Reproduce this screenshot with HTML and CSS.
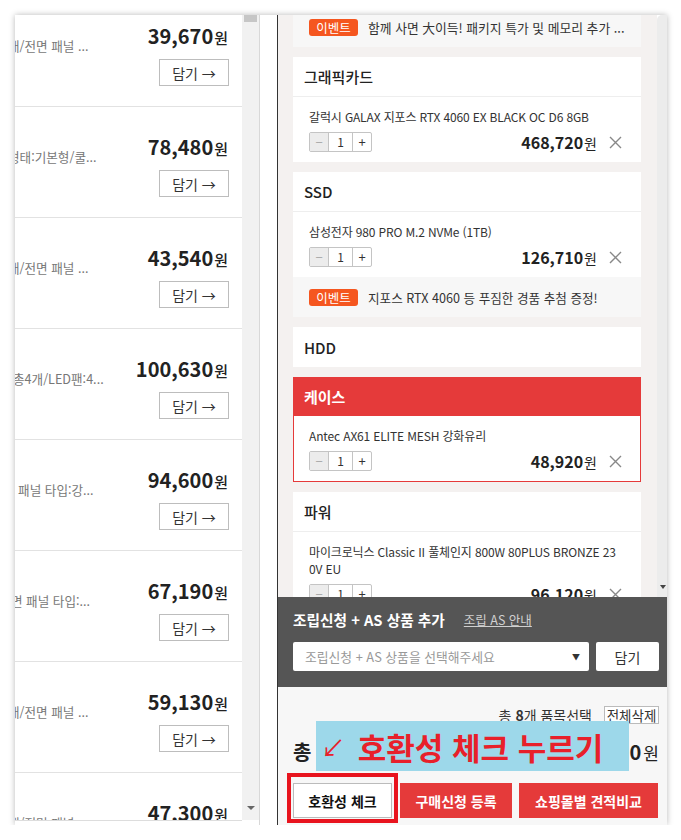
FILE: index.html
```html
<!DOCTYPE html>
<html lang="ko">
<head>
<meta charset="utf-8">
<title>견적</title>
<link rel="stylesheet" href="styles.css">
</head>
<body>
<div class="frame">
  <div class="left">
    <div class="list">
      <div class="row first"><div class="desc i7">개/전면 패널 ...</div><div class="buy"><div class="lprice">39,670<span>원</span></div><button class="add">담기 →</button></div></div>
      <div class="row"><div class="desc i6">형태:기본형/쿨...</div><div class="buy"><div class="lprice">78,480<span>원</span></div><button class="add">담기 →</button></div></div>
      <div class="row"><div class="desc i7">개/전면 패널 ...</div><div class="buy"><div class="lprice">43,540<span>원</span></div><button class="add">담기 →</button></div></div>
      <div class="row"><div class="desc i2">총4개/LED팬:4...</div><div class="buy"><div class="lprice">100,630<span>원</span></div><button class="add">담기 →</button></div></div>
      <div class="row"><div class="desc i12">면 패널 타입:강...</div><div class="buy"><div class="lprice">94,600<span>원</span></div><button class="add">담기 →</button></div></div>
      <div class="row"><div class="desc i3">면 패널 타입:...</div><div class="buy"><div class="lprice">67,190<span>원</span></div><button class="add">담기 →</button></div></div>
      <div class="row"><div class="desc i7">개/전면 패널 ...</div><div class="buy"><div class="lprice">59,130<span>원</span></div><button class="add">담기 →</button></div></div>
      <div class="row"><div class="desc i7">개/전면 패널 ...</div><div class="buy"><div class="lprice">47,300<span>원</span></div><button class="add">담기 →</button></div></div>
    </div>
    <div class="vscroll"><div class="thumb"></div><div class="varrow"></div></div>
  </div>
  <div class="gutter"></div>
  <div class="right">
    <div class="scrollarea">
      <div class="cards">
        <div class="card top">
          <div class="event"><span class="badge">이벤트</span><span class="etext">함께 사면 大이득! 패키지 특가 및 메모리 추가 ...</span></div>
        </div>
        <div class="card">
          <div class="chead">그래픽카드</div>
          <div class="cbody">
            <div class="pname">갈럭시 GALAX 지포스 RTX 4060 EX BLACK OC D6 8GB</div>
            <div class="prow">
              <div class="qty"><span class="q minus">−</span><span class="q num">1</span><span class="q plus">+</span></div>
              <div class="price">468,720<span>원</span></div>
              <svg class="del" viewBox="0 0 13 13"><path d="M1 1L12 12M12 1L1 12"/></svg>
            </div>
          </div>
        </div>
        <div class="card">
          <div class="chead">SSD</div>
          <div class="cbody">
            <div class="pname">삼성전자 980 PRO M.2 NVMe (1TB)</div>
            <div class="prow">
              <div class="qty"><span class="q minus">−</span><span class="q num">1</span><span class="q plus">+</span></div>
              <div class="price">126,710<span>원</span></div>
              <svg class="del" viewBox="0 0 13 13"><path d="M1 1L12 12M12 1L1 12"/></svg>
            </div>
          </div>
          <div class="event"><span class="badge">이벤트</span><span class="etext e2">지포스 RTX 4060 등 푸짐한 경품 추첨 증정!</span></div>
        </div>
        <div class="card">
          <div class="chead solo">HDD</div>
        </div>
        <div class="card sel">
          <div class="chead">케이스</div>
          <div class="cbody">
            <div class="pname">Antec AX61 ELITE MESH 강화유리</div>
            <div class="prow">
              <div class="qty"><span class="q minus">−</span><span class="q num">1</span><span class="q plus">+</span></div>
              <div class="price">48,920<span>원</span></div>
              <svg class="del" viewBox="0 0 13 13"><path d="M1 1L12 12M12 1L1 12"/></svg>
            </div>
          </div>
        </div>
        <div class="card">
          <div class="chead">파워</div>
          <div class="cbody">
            <div class="pname">마이크로닉스 Classic II 풀체인지 800W 80PLUS BRONZE 230V EU</div>
            <div class="prow">
              <div class="qty"><span class="q minus">−</span><span class="q num">1</span><span class="q plus">+</span></div>
              <div class="price">96,120<span>원</span></div>
              <svg class="del" viewBox="0 0 13 13"><path d="M1 1L12 12M12 1L1 12"/></svg>
            </div>
          </div>
        </div>
      </div>
      <div class="rscroll"><div class="rarrow"></div></div>
    </div>
    <div class="assembly">
      <div class="atitle"><b>조립신청 + AS 상품 추가</b><a href="#" class="alink">조립 AS 안내</a></div>
      <div class="aform">
        <div class="select"><span>조립신청 + AS 상품을 선택해주세요</span><span class="caret">▼</span></div>
        <button class="abtn">담기</button>
      </div>
    </div>
    <div class="summary">
      <div class="srow1"><span class="cnt">총 <b>8</b>개 품목선택</span><button class="delall">전체삭제</button></div>
      <div class="srow2"><span class="tlabel">총</span><span class="total">1,108,910<span>원</span></span></div>
      <div class="btns">
        <button class="btn white">호환성 체크</button>
        <button class="btn red w2">구매신청 등록</button>
        <button class="btn red w3">쇼핑몰별 견적비교</button>
      </div>
      <div class="note"><span class="narrow">↙</span> 호환성 체크 누르기</div>
      <div class="hilite"></div>
    </div>
  </div>
</div>
</body>
</html>
```

FILE: styles.css
```css
* { box-sizing: border-box; margin: 0; padding: 0; }
html, body { background: #fff; }
body {
  font-family: "Noto Sans CJK KR", "Noto Sans", sans-serif;
  color: #333;
}
button { font-family: inherit; cursor: pointer; }

.frame {
  margin: 15px 0 0 15px;
  width: 652px;
  height: 810px;
  display: flex;
  background: #fff;
  box-shadow: 0 0 6px rgba(0, 0, 0, 0.28);
  overflow: hidden;
}

/* left list */
.left { width: 244px; height: 100%; display: flex; }
.list {
  width: 227px;
  height: 806px;
  overflow: hidden;
  border-bottom: 1px solid #ddd;
}
.row {
  height: 111px;
  display: flex;
  border-bottom: 1px solid #e2e2e2;
}
.row.first { margin-top: -19px; }
.desc {
  flex: 1;
  min-width: 0;
  overflow: hidden;
  white-space: nowrap;
  font-size: 12.6px;
  line-height: 18px;
  padding-top: 41px;
  color: #777;
}
.i2 { text-indent: -2px; }
.i3 { text-indent: -4px; }
.i6 { text-indent: -7px; }
.i7 { text-indent: -7px; }
.i12 { text-indent: -12px; }
.buy {
  width: 90px;
  display: flex;
  flex-direction: column;
  align-items: flex-end;
  padding-top: 28px;
  padding-right: 14px;
  box-sizing: content-box;
}
.lprice {
  font-size: 20px;
  font-weight: 700;
  line-height: 24px;
  color: #222;
  white-space: nowrap;
}
.lprice span { font-size: 15px; font-weight: 500; margin-left: 1px; }
.add {
  margin-top: 9px;
  width: 70px;
  height: 27px;
  border: 1px solid #bdbdbd;
  background: #fff;
  color: #333;
  font-size: 14px;
  margin-right: -1px;
}
.vscroll {
  width: 17px;
  height: 805px;
  background: #f1f1f1;
  position: relative;
}
.thumb {
  margin: 0 2px;
  height: 7px;
  background: #c6c6c6;
}
.varrow {
  position: absolute;
  left: 5px;
  bottom: 10px;
  width: 0; height: 0;
  border-left: 4px solid transparent;
  border-right: 4px solid transparent;
  border-top: 4px solid #666;
}
.gutter {
  width: 19px;
  height: 100%;
  border-left: 1px solid #d8d8d8;
  border-right: 1px solid #333;
  background: #fff;
}

/* right panel */
.right { width: 389px; height: 100%; display: flex; flex-direction: column; }
.scrollarea { height: 582px; display: flex; overflow: hidden; }
.cards {
  width: 379px;
  background: #f4f1f0;
  padding: 0 16px 0 15px;
  overflow: hidden;
}
.rscroll {
  width: 10px;
  background: #ececec;
  border-top-left-radius: 5px;
  position: relative;
}
.rarrow {
  position: absolute;
  left: 3px;
  bottom: 8px;
  width: 0; height: 0;
  border-left: 3px solid transparent;
  border-right: 3px solid transparent;
  border-top: 4px solid #444;
}
.card { background: #fff; margin-bottom: 10px; }
.card.top { margin-top: -8px; }
.chead {
  height: 40px;
  padding-left: 11px;
  display: flex;
  align-items: center;
  font-size: 15px;
  font-weight: 500;
  color: #222;
  border-bottom: 1px solid #eee;
}
.chead.solo { border-bottom: none; }
.cbody { padding: 11px 19px 10px 16px; }
.pname {
  font-size: 12px;
  line-height: 17px;
  color: #333;
  word-break: break-all;
  letter-spacing: -0.15px;
}
.prow { display: flex; align-items: center; margin-top: 7px; height: 20px; }
.qty {
  display: flex;
  height: 20px;
  border: 1px solid #c4c4c4;
  border-radius: 2px;
  overflow: hidden;
}
.q {
  display: flex;
  align-items: center;
  justify-content: center;
  font-size: 13px;
  color: #333;
  line-height: 18px;
}
.minus { width: 19px; background: #ececec; color: #aaa; border-right: 1px solid #c4c4c4; }
.num { width: 24px; border-right: 1px solid #c4c4c4; font-size: 12px; }
.plus { width: 18px; }
.price {
  margin-left: auto;
  font-size: 16px;
  font-weight: 700;
  color: #222;
  white-space: nowrap;
}
.price span { font-size: 14px; font-weight: 400; margin-left: 1px; }
.del { width: 13px; height: 13px; margin-left: 12px; }
.del path { stroke: #888; stroke-width: 1.4; fill: none; }
.card.sel .chead {
  background: #e53a3a;
  color: #fff;
  font-weight: 700;
  border-bottom: none;
  height: 39px;
}
.card.sel .cbody {
  border: 1px solid #e53a3a;
  border-top: none;
  padding: 11px 18px 10px 15px;
}
.event {
  height: 40px;
  background: #f7f7f7;
  padding-left: 16px;
  display: flex;
  align-items: center;
  font-size: 12.8px;
  color: #333;
  white-space: nowrap;
}
.e2 { font-size: 12.6px; }
.badge {
  width: 49px;
  height: 17px;
  border-radius: 3px;
  background: #f5561f;
  color: #fff;
  display: flex;
  align-items: center;
  justify-content: center;
  font-size: 12.5px;
  margin-right: 10px;
}

/* assembly */
.assembly {
  height: 90px;
  background: #555;
  padding: 12px 8px 0 15px;
}
.atitle { display: flex; align-items: center; height: 20px; }
.atitle b { color: #fff; font-size: 14.7px; font-weight: 700; }
.alink { margin-left: 19px; color: #d0d0d0; font-size: 12.5px; text-decoration: underline; }
.aform { display: flex; gap: 7px; margin-top: 13px; }
.select {
  width: 296px;
  height: 29px;
  background: #fff;
  border-radius: 2px;
  display: flex;
  align-items: center;
  justify-content: space-between;
  padding: 0 9px 0 12px;
  color: #999;
  font-size: 12.8px;
}
.caret { color: #333; font-size: 8px; }
.abtn {
  width: 63px;
  height: 29px;
  background: #fff;
  border: none;
  border-radius: 2px;
  color: #333;
  font-size: 14px;
}

/* summary */
.summary {
  flex: 1;
  background: #f7f7f7;
  padding: 19px 8px 0 15px;
  position: relative;
}
.srow1 { display: flex; justify-content: flex-end; align-items: center; height: 18px; }
.cnt { font-size: 14px; color: #333; margin-right: 12px; }
.cnt b { font-weight: 700; }
.delall {
  width: 55px;
  height: 18px;
  border: 1px solid #bbb;
  background: #fff;
  font-size: 13.5px;
  line-height: 14px;
  color: #333;
  padding: 0;
}
.srow2 {
  display: flex;
  justify-content: space-between;
  align-items: center;
  margin-top: 13px;
  height: 28px;
}
.tlabel { font-size: 20px; font-weight: 700; color: #222; }
.total { font-size: 20px; font-weight: 700; color: #222; }
.total span { font-size: 17px; font-weight: 400; margin-left: 2px; }
.btns { display: flex; margin-top: 18px; }
.btn {
  height: 35px;
  font-size: 14px;
  font-weight: 700;
}
.btn.white { width: 99px; background: #fff; border: 1px solid #bbb; color: #111; }
.btn.red { background: #e53a3a; border: none; color: #fff; }
.w2 { width: 112px; margin-left: 8px; }
.w3 { width: 139px; margin-left: 7px; }
.note {
  position: absolute;
  left: 38px;
  top: 34px;
  width: 313px;
  height: 50px;
  background: #9dd8ea;
  color: #e8202a;
  font-size: 31px;
  font-weight: 700;
  display: flex;
  align-items: center;
  padding-left: 5px;
  white-space: pre;
}
.narrow { font-weight: 400; font-size: 24px; margin-right: 4px; }
.hilite {
  position: absolute;
  left: 9px;
  top: 86px;
  width: 111px;
  height: 50px;
  border: 4px solid #e8141e;
}
```
